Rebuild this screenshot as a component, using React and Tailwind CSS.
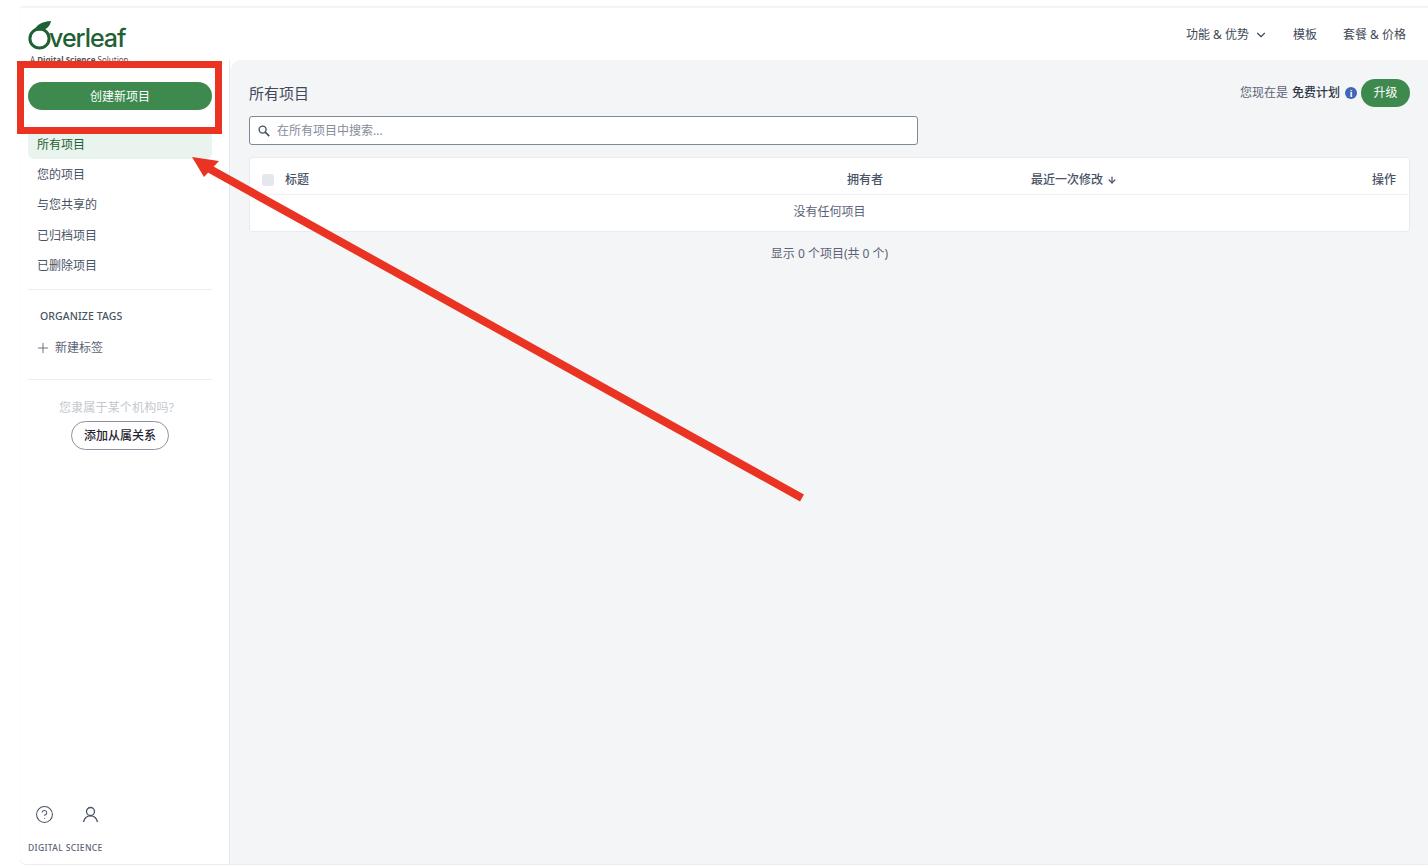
import React from 'react';
import { ChevronDown, CircleHelp, Plus, ArrowDown } from 'lucide-react';

const navItems = ['您的项目', '与您共享的', '已归档项目', '已删除项目'];

const fontStack = { fontFamily: '"Noto Sans", "Noto Sans CJK SC", sans-serif' };

const Logo = () => (
  <div className="relative h-[30px] w-[100px]">
    <svg className="absolute left-0 top-0" width="26" height="30" viewBox="0 0 26 30" fill="none">
      <circle cx="11.5" cy="18.5" r="9.6" stroke="#1f6034" strokeWidth="3" />
      <path d="M5 12 C8 5 14 1.5 23 1 C22 7 17 11 10 10.5 C9 10.5 7 11 5 12 Z" fill="#1f6034" />
    </svg>
    <span className="absolute left-[21px] top-[1px] text-[25px] leading-[34px] font-medium tracking-[-1px] text-[#1f6034] [font-family:Inter,sans-serif]">
      verleaf
    </span>
  </div>
);

const Sidebar = () => (
  <aside className="flex w-[210px] shrink-0 flex-col border-r border-[#e7e9ee] pl-2 pr-[17px]">
    <div className="h-[22px]"></div>
    <button className="h-7 w-full rounded-full bg-[#3e8a4e] pt-[2px] text-xs text-white">创建新项目</button>
    <div className="mt-[19px] flex h-[30px] items-center rounded-b-md bg-[#e9f4ee] pl-[9px] pt-[2px] text-xs text-[#1f6034]">所有项目</div>
    {navItems.map((item) => (
      <div key={item} className="flex h-[30.25px] items-center pl-[9px] pt-[2px] text-xs text-[#495365]">{item}</div>
    ))}
    <div className="mt-[9px] border-t border-[#eceef1]"></div>
    <div className="mt-[19px] pl-3 text-[10.5px] leading-[14px] font-medium tracking-[0.1px] text-[#495365]">ORGANIZE TAGS</div>
    <div className="mt-[16px] flex h-[18px] items-center gap-1 pl-[7px] text-xs text-[#5a6376]">
      <Plus size={16} strokeWidth={1.2} className="text-[#495365]" />
      <span>新建标签</span>
    </div>
    <div className="mt-[22px] border-t border-[#eceef1]"></div>
    <div className="mt-[20px] pr-[7px] text-center text-xs leading-4 tracking-[0.2px] text-[#c4c8d0]">您隶属于某个机构吗?</div>
    <div className="mt-[5px] flex justify-center">
      <button className="h-[29px] w-[98px] rounded-full border border-[#8b92a0] text-xs font-medium text-[#1f2430]">添加从属关系</button>
    </div>
    <div className="mt-auto flex items-center gap-7 pl-[7px]">
      <CircleHelp size={19} strokeWidth={1.3} className="text-[#495365]" />
      <svg width="17" height="17" viewBox="0 0 17 17" fill="none" stroke="#495365" strokeWidth="1.3">
        <circle cx="8.5" cy="5.5" r="4" />
        <path d="M1.5 16 C2.5 11.5 5 9.8 8.5 9.8 C12 9.8 14.5 11.5 15.5 16" />
      </svg>
    </div>
    <div className="mt-[18px] mb-[10px] text-[8.5px] leading-3 font-medium tracking-[0.35px] text-[#5a6376]">DIGITAL SCIENCE</div>
  </aside>
);

const Main = () => (
  <main className="flex min-w-0 flex-1 flex-col rounded-tl-xl bg-[#f4f5f7] pt-[19px] pl-[19px] pr-[18px]">
    <div className="flex h-[28px] items-center justify-between">
      <h1 className="text-[15px] font-normal text-[#3f4859]">所有项目</h1>
      <div className="flex items-center text-xs text-[#5a6376]">
        <span>您现在是</span>
        <span className="ml-[4px] font-medium text-[#2f3746]">免费计划</span>
        <span className="ml-[5px] flex h-3 w-3 items-center justify-center rounded-full bg-[#3f66b8] text-[9px] leading-none font-bold text-white">i</span>
        <button className="ml-1 h-7 w-[49px] rounded-full bg-[#3e8a4e] text-xs text-white">升级</button>
      </div>
    </div>
    <div className="mt-[9px] flex h-[29px] w-[669px] items-center gap-[7px] rounded-[3px] border border-[#7f8896] bg-white pl-2 pt-px">
      <svg width="12" height="12" viewBox="0 0 12 12" fill="none" stroke="#495365" strokeWidth="1.4">
        <circle cx="4.6" cy="4.6" r="3.5" />
        <path d="M7.2 7.2 L11.2 11.2" strokeWidth="1.7" />
      </svg>
      <span className="text-xs text-[#858c9a]">在所有项目中搜索...</span>
    </div>
    <div className="mt-3 rounded-[3px] border border-[#e9ebef] bg-white">
      <div className="flex h-[37px] items-center border-b border-[#eef0f3] pl-[12px] pr-[13px] pt-[7px] text-xs font-medium text-[#495365]">
        <span className="h-3 w-3 rounded-[3px] bg-[#e5e7ec]"></span>
        <span className="ml-[11px] w-[562px]">标题</span>
        <span className="w-[184px]">拥有者</span>
        <span className="flex items-center gap-[4px]">
          最近一次修改
          <ArrowDown size={10} strokeWidth={3} />
        </span>
        <span className="ml-auto">操作</span>
      </div>
      <div className="flex h-[36px] items-center justify-center pb-[3px] text-xs text-[#5a6376]">没有任何项目</div>
    </div>
    <div className="mt-[13px] text-center text-xs leading-[17px] text-[#5a6376]">显示 0 个项目(共 0 个)</div>
  </main>
);

const App = () => (
  <div className="relative h-[866px] w-[1428px] overflow-hidden bg-white" style={fontStack}>
    <div className="ml-5 mt-[6px] flex h-[858px] flex-col rounded-bl-md border-t-2 border-[#f3f4f5] bg-white shadow-[0_1px_1px_#e9ebee]">
      <header className="flex h-[52px] shrink-0 items-start justify-between">
        <div className="ml-2 mt-[12px]">
          <Logo />
          <div className="mt-[5px] pl-[2px] text-[8px] leading-[9px] text-[#555]">
            A <span className="font-bold">Digital Science</span> Solution
          </div>
        </div>
        <nav className="mt-[19px] mr-[22px] flex items-center text-xs text-[#3f4859]">
          <span>功能 &amp; 优势</span>
          <ChevronDown size={14} strokeWidth={1.9} className="ml-[5px]" />
          <span className="ml-[25px]">模板</span>
          <span className="ml-[26px]">套餐 &amp; 价格</span>
        </nav>
      </header>
      <div className="flex min-h-0 flex-1">
        <Sidebar />
        <Main />
      </div>
    </div>

    {/* annotation drawn over the page */}
    <div className="absolute left-[17px] top-[61px] h-[73px] w-[205px] border-[7px] border-[#ea3323]"></div>
    <svg className="absolute left-0 top-0" width="1428" height="866" fill="none">
      <line x1="802" y1="498" x2="208" y2="168" stroke="#ea3323" strokeWidth="8" />
      <polygon points="192,157 219,161 204,177" fill="#ea3323" />
    </svg>
  </div>
);

export default App;
